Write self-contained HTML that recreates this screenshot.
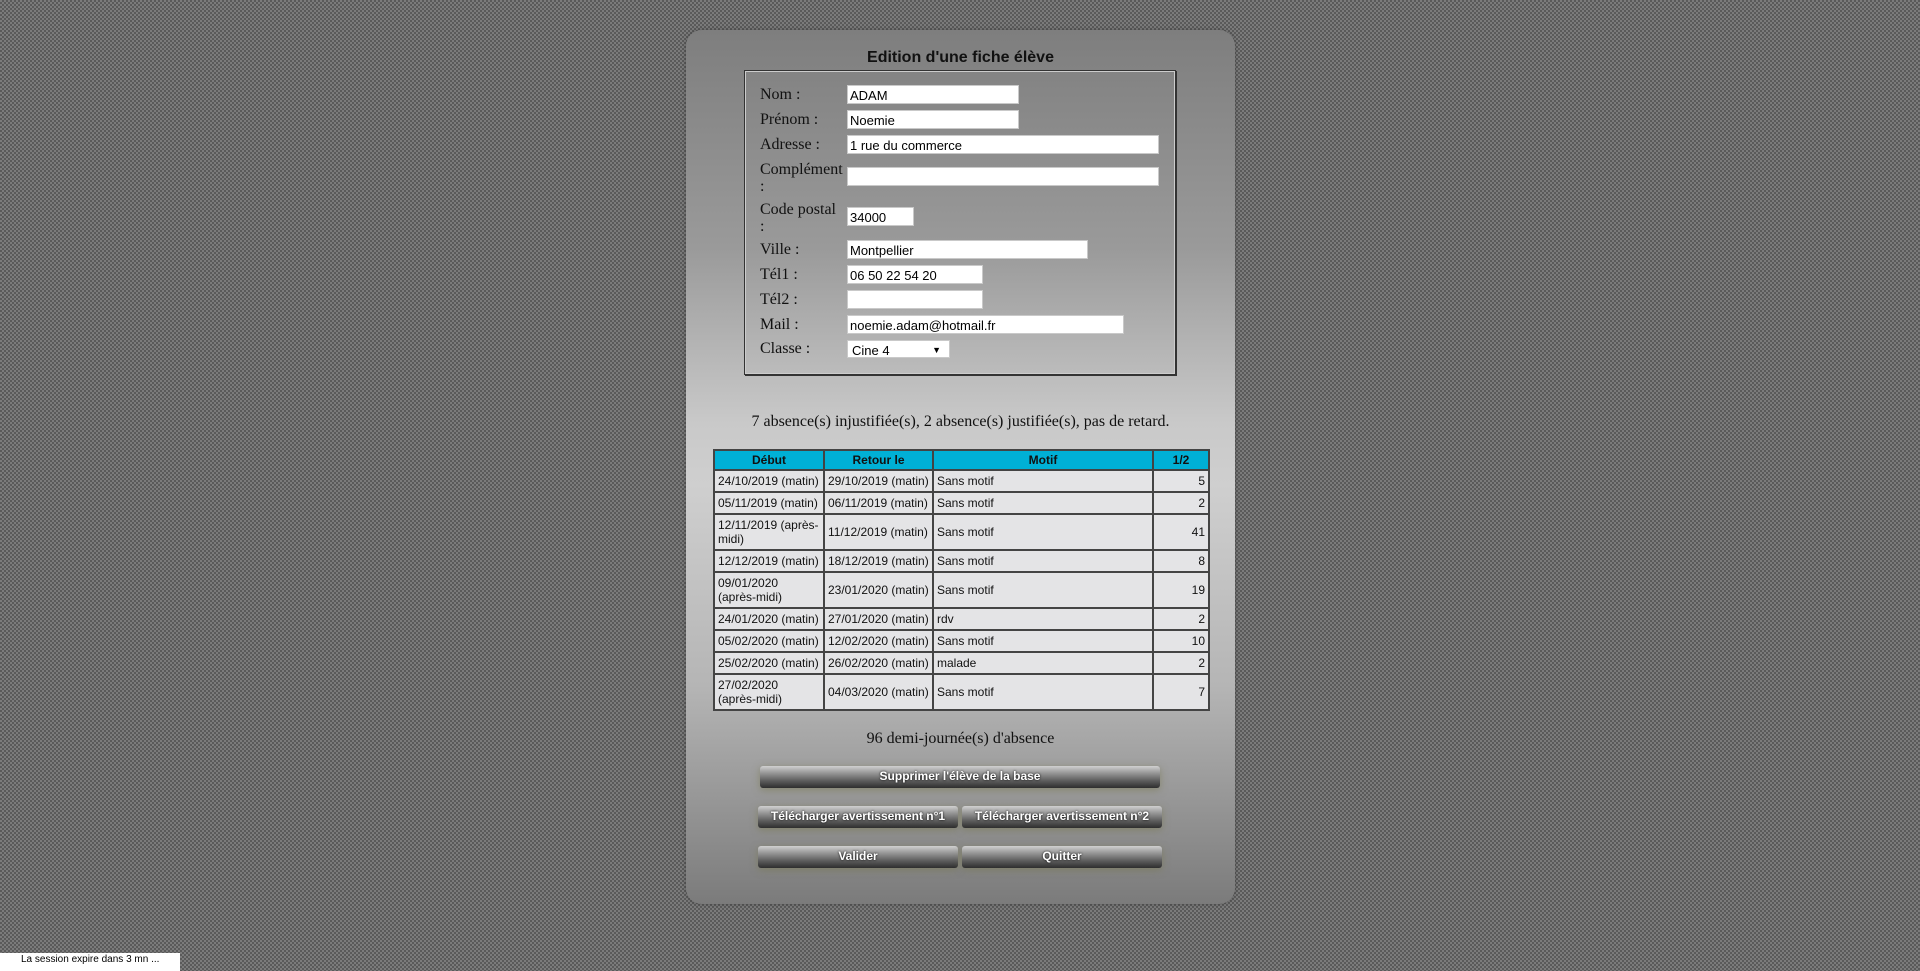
<!DOCTYPE html>
<html><head><meta charset="utf-8"><style>
html,body{margin:0;padding:0;width:1920px;height:971px;overflow:hidden}
body{background-color:#6a6a6a;background-image:repeating-conic-gradient(#5a5a5a 0 25%,#7b7b7b 0 50%);background-size:4px 4px;position:relative;font-family:"Liberation Serif",serif}
.panel{position:absolute;left:686px;top:30px;width:549px;height:874px;border-radius:16px;background:linear-gradient(#7e7e7e 0%,#9a9a9a 25%,#c9c9c9 45%,#cfcfcf 52%,#b5b5b5 75%,#7b7b7b 100%);box-shadow:0 0 4px rgba(0,0,0,.3)}
h1{position:absolute;margin:0;left:686px;width:549px;top:49px;text-align:center;font:bold 16px "Liberation Sans",sans-serif;color:#111}
.fs{position:absolute;left:744px;top:70px;width:430px;height:303px;border:1px solid #333;box-shadow:inset 1px 1px 0 #ccc,inset -1px -1px 0 #ccc,1px 1px 0 #333}
.lbl{position:absolute;left:760px;font-size:16px;color:#111;line-height:17px}
.inp{position:absolute;left:847px;height:19px;background:#fff;border:1px solid #c9c9c9;font:13px "Liberation Sans",sans-serif;line-height:19px;padding-left:2px;box-sizing:border-box;color:#000}
.txt{position:absolute;left:686px;width:549px;text-align:center;font-size:16px;color:#111}
table{position:absolute;left:713px;top:449px;width:495px;border-collapse:collapse;table-layout:fixed;font:12px "Liberation Sans",sans-serif;color:#111}
td,th{border:2px solid #444;padding:0 3px;line-height:14px;background:#e4e4e6}
th{background:#00b0d6;height:18px;font-weight:bold}
td{height:20px}
tr.d td{height:34px}
td.n{text-align:right}
.btn{position:absolute;height:22px;border-radius:3px;background:linear-gradient(#d0d0d0 0%,#9a9a9a 30%,#606060 65%,#2e2e2e 100%);color:#fff;font:bold 12px "Liberation Sans",sans-serif;text-align:center;line-height:20px;box-shadow:0 2px 8px rgba(120,120,80,.6);text-shadow:0 0 2px #000}
.sess{position:absolute;left:0;top:953px;width:180px;height:18px;background:#fff;font:10px "Liberation Sans",sans-serif;line-height:14px;color:#000}
</style></head><body>
<div class="panel"></div>
<h1>Edition d'une fiche élève</h1>
<div class="fs"></div>
<div class="lbl" style="top:86px">Nom :</div><div class="inp" style="top:85px;width:172px">ADAM</div>
<div class="lbl" style="top:111px">Prénom :</div><div class="inp" style="top:110px;width:172px">Noemie</div>
<div class="lbl" style="top:136px">Adresse :</div><div class="inp" style="top:135px;width:312px">1 rue du commerce</div>
<div class="lbl" style="top:161px">Complément<br>:</div><div class="inp" style="top:167px;width:312px"></div>
<div class="lbl" style="top:201px">Code postal<br>:</div><div class="inp" style="top:207px;width:67px">34000</div>
<div class="lbl" style="top:241px">Ville :</div><div class="inp" style="top:240px;width:241px">Montpellier</div>
<div class="lbl" style="top:266px">Tél1 :</div><div class="inp" style="top:265px;width:136px">06 50 22 54 20</div>
<div class="lbl" style="top:291px">Tél2 :</div><div class="inp" style="top:290px;width:136px"></div>
<div class="lbl" style="top:316px">Mail :</div><div class="inp" style="top:315px;width:277px">noemie.adam@hotmail.fr</div>
<div class="lbl" style="top:340px">Classe :</div><div class="inp" style="top:340px;width:103px;height:18px;padding-left:4px">Cine 4<span style="position:absolute;right:8px;font-size:9px">▼</span></div>
<div class="txt" style="top:413px">7 absence(s) injustifiée(s), 2 absence(s) justifiée(s), pas de retard.</div>
<table>
<colgroup><col style="width:110px"><col style="width:109px"><col style="width:220px"><col style="width:56px"></colgroup>
<tr><th>Début</th><th>Retour le</th><th>Motif</th><th>1/2</th></tr>
<tr><td>24/10/2019 (matin)</td><td>29/10/2019 (matin)</td><td>Sans motif</td><td class="n">5</td></tr>
<tr><td>05/11/2019 (matin)</td><td>06/11/2019 (matin)</td><td>Sans motif</td><td class="n">2</td></tr>
<tr class="d"><td>12/11/2019 (après-<br>midi)</td><td>11/12/2019 (matin)</td><td>Sans motif</td><td class="n">41</td></tr>
<tr><td>12/12/2019 (matin)</td><td>18/12/2019 (matin)</td><td>Sans motif</td><td class="n">8</td></tr>
<tr class="d"><td>09/01/2020<br>(après-midi)</td><td>23/01/2020 (matin)</td><td>Sans motif</td><td class="n">19</td></tr>
<tr><td>24/01/2020 (matin)</td><td>27/01/2020 (matin)</td><td>rdv</td><td class="n">2</td></tr>
<tr><td>05/02/2020 (matin)</td><td>12/02/2020 (matin)</td><td>Sans motif</td><td class="n">10</td></tr>
<tr><td>25/02/2020 (matin)</td><td>26/02/2020 (matin)</td><td>malade</td><td class="n">2</td></tr>
<tr class="d"><td>27/02/2020<br>(après-midi)</td><td>04/03/2020 (matin)</td><td>Sans motif</td><td class="n">7</td></tr>
</table>
<div class="txt" style="top:730px">96 demi-journée(s) d'absence</div>
<div class="btn" style="left:760px;top:766px;width:400px">Supprimer l'élève de la base</div>
<div class="btn" style="left:758px;top:806px;width:200px">Télécharger avertissement n°1</div>
<div class="btn" style="left:962px;top:806px;width:200px">Télécharger avertissement n°2</div>
<div class="btn" style="left:758px;top:846px;width:200px">Valider</div>
<div class="btn" style="left:962px;top:846px;width:200px">Quitter</div>
<div class="sess"><span style="margin-left:21px">La session expire dans 3 mn ...</span></div>
</body></html>
